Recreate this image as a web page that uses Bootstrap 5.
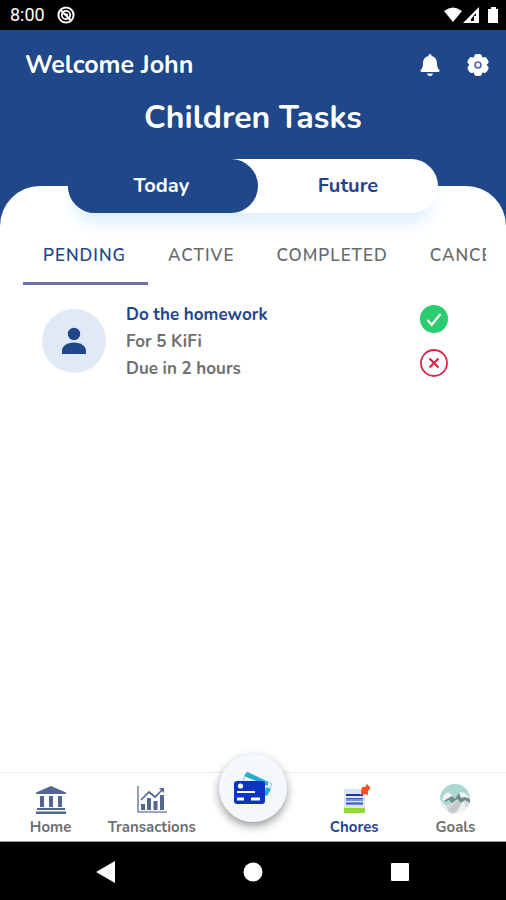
<!DOCTYPE html>
<html lang="en">
<head>
<meta charset="utf-8">
<meta name="viewport" content="width=device-width, initial-scale=1">
<title>Children Tasks</title>
<link href="https://cdn.jsdelivr.net/npm/bootstrap@5.3.0/dist/css/bootstrap.min.css" rel="stylesheet">
<style>
:root { --navy: #1f4789; --ink: #23458c; --muted: #6a6a6a; }
body { font-family: Nunito, "Open Sans", "Noto Sans", sans-serif; background: var(--navy); }
svg { display: block; }
.status-bar { height: 30px; font: 18px/30px Roboto, sans-serif; padding: 0 7px 0 10px; }
.top-row { padding: 17px 16px 0 25px; }
.greeting { font-size: 25px; line-height: 36px; }
.page-title { font-size: 32px; line-height: 40px; margin: 15px 0 48px; }
.sheet { border-radius: 40px 40px 0 0; }
.day-toggle { width: 73%; height: 54px; margin: -27px auto 0; border-radius: 27px; background: linear-gradient(90deg, var(--navy) 100px, #fff 100px); box-shadow: 0 16px 16px -6px #dceefd; position: relative; }
.day-toggle .btn { font-size: 20px; line-height: 28px; color: var(--ink); border: 0; border-radius: 27px; }
.day-toggle .btn.active { background: var(--navy); color: #fff; flex: 0 0 190px; padding-right: 16px; }
.state-tabs { margin: 12px 20px 0 23px; }
.state-tabs .nav-link { font: 600 17px/24px Nunito, Lato, sans-serif; letter-spacing: 1px; color: var(--muted); padding: 19px 22px 14px 20px; border-bottom: 3px solid transparent; white-space: nowrap; }
.state-tabs .nav-link.active { color: var(--ink); border-color: #6c72a8; }
.task { padding: 16px 58px 0 42px; gap: 20px; }
.avatar { width: 64px; height: 64px; background: #e1e9f6; margin-top: 8px; }
.task-text { font-size: 17px; line-height: 27px; color: #707070; font-weight: 700; }
.task-text h2 { font-size: 17px; line-height: 27px; color: var(--ink); }
.task-actions { gap: 16px; padding-top: 4px; }
.tab-bar { height: 70px; border-top: 1px solid #eee; border-bottom: 1px solid #999; }
.tab-bar a { flex: 1 1 0; min-width: 0; font-size: 15px; line-height: 20px; color: #707070; padding-top: 10px; gap: 2px; }
.tab-bar a.active { color: var(--ink); }
.card-fab { width: 68px; height: 68px; margin-top: -19px; background: #f4f7fc; box-shadow: 0 4px 10px #0006; }
.system-nav { height: 58px; padding: 0 33px; }
</style>
</head>
<body>
<div class="d-flex flex-column min-vh-100">
  <div class="status-bar bg-black text-white d-flex align-items-center">
    <span>8:00</span>
    <svg class="ms-2 me-auto" width="26" height="18" viewBox="-4 0 26 18" fill="none" stroke="#fff" aria-hidden="true"><circle cx="9" cy="9" r="7.600" stroke-width="2"/><circle cx="9" cy="9" r="4.200" stroke-width="1.800"/><path d="M3.500 4l10 10M7 8l4 1" stroke-width="2"/></svg>
    <svg width="56" height="20" viewBox="0 0 56 20" fill="#fff" aria-hidden="true"><path d="M1 6Q10 -1 19 6L10 17z"/><path d="M20 18L36 2v16z"/><path d="M28 14l5-6v8h-5z" fill="#000"/><path d="M31 11h2v5h-2z"/><path d="M45 4h3V2h5v2h2v14H45z"/></svg>
  </div>

  <header class="text-white">
    <div class="top-row d-flex align-items-center">
      <span class="greeting fw-bold me-auto">Welcome John</span>
      <button class="btn p-0 border-0 me-4" type="button" aria-label="Notifications">
        <svg width="24" height="26" viewBox="0 0 24 26" fill="#fff"><path d="M12 2q-1.500 0-1.600 2C6.500 5 5 8 5 11.500c0 3.500-.8 4.800-2.200 6.200-.8.900-.3 2.300 1 2.300h16.400c1.300 0 1.800-1.400 1-2.300C19.800 16.300 19 15 19 11.500 19 8 17.500 5 13.600 4Q13.500 2 12 2zM9 21.500h6Q14.500 24 12 24t-3-2.500z"/></svg>
      </button>
      <button class="btn p-0 border-0" type="button" aria-label="Settings">
        <svg width="24" height="24" viewBox="0 0 24 24"><g fill="#fff"><circle cx="12" cy="12" r="9"/><rect x="8" y="1" width="8" height="22" rx="3"/><rect x="8" y="1" width="8" height="22" rx="3" transform="rotate(60 12 12)"/><rect x="8" y="1" width="8" height="22" rx="3" transform="rotate(120 12 12)"/></g><circle cx="12" cy="12" r="3" fill="none" stroke="#536aa4" stroke-width="1.700"/></svg>
      </button>
    </div>
    <h1 class="page-title fw-bold text-center">Children Tasks</h1>
  </header>

  <main class="sheet bg-white flex-grow-1">
    <div class="day-toggle d-flex" role="group" aria-label="Day">
      <button class="btn active fw-bold" type="button" aria-pressed="true">Today</button>
      <button class="btn flex-fill fw-bold" type="button" aria-pressed="false">Future</button>
    </div>
    <nav class="state-tabs nav flex-nowrap overflow-hidden" aria-label="Task state">
      <a class="nav-link active" href="#pending" aria-current="page">PENDING</a>
      <a class="nav-link" href="#active">ACTIVE</a>
      <a class="nav-link" href="#completed">COMPLETED</a>
      <a class="nav-link" href="#canceled">CANCELED</a>
    </nav>
    <article class="task d-flex">
      <div class="avatar rounded-circle d-flex align-items-center justify-content-center flex-shrink-0">
        <svg width="26" height="28" viewBox="0 0 26 28" fill="#1f4789" aria-hidden="true"><circle cx="13" cy="7" r="6.200"/><path d="M1 27v-3c0-5 5-8.500 12-8.500S25 19 25 24v3z"/></svg>
      </div>
      <div class="task-text flex-grow-1">
        <h2 class="fw-bold mb-0">Do the homework</h2>
        <div>For 5 KiFi</div>
        <div>Due in 2 hours</div>
      </div>
      <div class="task-actions d-flex flex-column">
        <button class="btn p-0 border-0" type="button" aria-label="Approve"><svg width="28" height="28" viewBox="0 0 28 28" fill="none"><circle cx="14" cy="14" r="14" fill="#2dcc70"/><path d="M7.500 15l4.200 4.700L20.500 9" stroke="#fff" stroke-width="2.200"/></svg></button>
        <button class="btn p-0 border-0" type="button" aria-label="Reject"><svg width="28" height="28" viewBox="0 0 28 28" fill="none" stroke="#dc2848"><circle cx="14" cy="14" r="13" stroke-width="1.800"/><path d="M9.500 9.500l9 9m0-9l-9 9" stroke-width="2.200"/></svg></button>
      </div>
    </article>
  </main>

  <nav class="tab-bar bg-white d-flex" aria-label="Main">
    <a class="d-flex flex-column align-items-center fw-bold text-decoration-none" href="#home">
      <svg width="32" height="32" viewBox="0 0 32 32" fill="#53668f" aria-hidden="true"><path d="M1 9.500L16 3l15 6.500V11H1zM5 13h4v11H5zM14 13h4v11h-4zM23 13h4v11h-4zM2 25h28v2H2zM1 28.500h30V31H1z"/></svg>
      Home
    </a>
    <a class="d-flex flex-column align-items-center fw-bold text-decoration-none" href="#transactions">
      <svg width="32" height="32" viewBox="0 0 32 32" aria-hidden="true"><path d="M2 3v26h29" fill="none" stroke="#7c89a6" stroke-width="1.600"/><path d="M5 21h4v6H5zM11 15h4v12h-4zM17.500 18h4v9h-4zM24 12h4v15h-4z" fill="#53668f"/><path d="M5 17l8-8 6 5 8-8" fill="none" stroke="#53668f" stroke-width="1.700"/><path d="M23 5h5v5z" fill="#53668f"/></svg>
      Transactions
    </a>
    <a class="d-flex flex-column align-items-center p-0 text-decoration-none" href="#cards" aria-label="Cards">
      <span class="card-fab rounded-circle d-flex align-items-center justify-content-center">
        <svg width="42" height="38" viewBox="0 0 42 38" aria-hidden="true"><path d="M15 3l25 12-5 10-10-5-14-8z" fill="#eef7fc" stroke="#82cde8"/><path d="M15 3l21 10v4L12 7zM34 18l5 2-4 7-3-1z" fill="#27acd8"/><rect x="2" y="12" width="31" height="23" rx="3" fill="#0b35c0"/><circle cx="8.500" cy="17" r="2.600" fill="#fff"/><path d="M5 22h18v2H5zM5 28.500h7v3H5zM19 28.500h9v3h-9z" fill="#fff"/></svg>
      </span>
    </a>
    <a class="active d-flex flex-column align-items-center fw-bold text-decoration-none" href="#chores" aria-current="page">
      <svg width="32" height="32" viewBox="0 0 32 32" aria-hidden="true"><path d="M6 6h18l3 4v15H6z" fill="#dce5ee"/><path d="M8 11h17v2H8z" fill="#1739a8"/><path d="M8 15h17v3H8zM8 19h17v3H8z" fill="#7592d5"/><path d="M8 15h17v1H8zM8 20h17v1H8z" fill="#3c61bd"/><path d="M6 25h21v5H6z" fill="#91d832"/><path d="M24 4h3l2-3 4 4-3 3v4l-3-1-3 1-1-4z" fill="#f6501e"/><path d="M25 9l-3 3" stroke="#a66"/></svg>
      Chores
    </a>
    <a class="d-flex flex-column align-items-center fw-bold text-decoration-none" href="#goals">
      <svg width="32" height="32" viewBox="0 0 32 32" aria-hidden="true"><circle cx="16" cy="16" r="15" fill="#eef1f2"/><path d="M1 16a15 15 0 0 1 30 0l-8 2-14 8z" fill="#abd8d3"/><path d="M7 22l12-6 5 1-5 11-6 3-4-3z" fill="#d3d6d9"/><path d="M24 16l5 1 1 6-3 2z" fill="#d3d6d9"/><path d="M3 17l2-5 4-3 4 3 1 3-7 3zM18 14l3-5 4 1 4 3 1 5-6-3z" fill="#f1f3f5"/><path d="M6 17l7-4 3 3 4-6 2 5 4-1 5 2v4l-5-3-4 3-4-4-5 4-3-3-4 2z" fill="#6f8b8a"/><path d="M9 27l10-9 3 2-5 9-4 1z" fill="#c3c8cb"/></svg>
      Goals
    </a>
  </nav>

  <div class="system-nav bg-black row g-0 align-items-center text-center">
    <div class="col"><button class="btn p-0 border-0" type="button" aria-label="Back"><svg width="20" height="22" viewBox="0 0 20 22" fill="#fff"><path d="M19 0v22L0 11z"/></svg></button></div>
    <div class="col"><button class="btn p-0 border-0" type="button" aria-label="Home screen"><svg width="20" height="20" viewBox="0 0 20 20" fill="#fff"><circle cx="10" cy="10" r="9.500"/></svg></button></div>
    <div class="col"><button class="btn p-0 border-0" type="button" aria-label="Recent apps"><svg width="20" height="20" viewBox="0 0 20 20" fill="#fff"><rect x="1" y="1" width="18" height="18" rx="1"/></svg></button></div>
  </div>
</div>
<script src="https://cdn.jsdelivr.net/npm/bootstrap@5.3.0/dist/js/bootstrap.bundle.min.js"></script>
</body>
</html>
